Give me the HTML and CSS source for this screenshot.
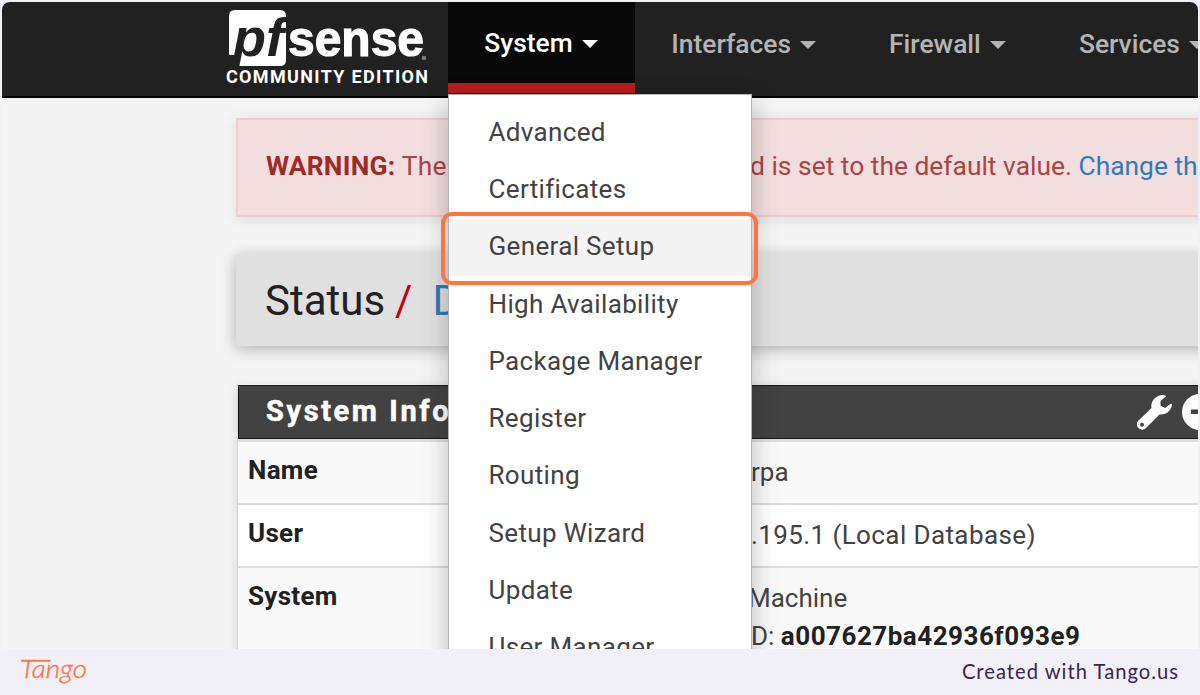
FILE: index.html
```html
<!DOCTYPE html>
<html lang="en">
<head>
<meta charset="utf-8">
<title>pfSense - Status</title>
<link rel="stylesheet" href="styles.css">
</head>
<body>
<div class="frame">
  <header class="navbar">
    <svg class="brand" width="222" height="94" viewBox="226 2 222 94">
      <path d="M235 10H280Q286 10 286 16V60Q286 66 280 66H235L237 55H229V16Q229 10 235 10Z" fill="#fff"/>
      <text x="233" y="55.500" class="brand-pf" textLength="51" lengthAdjust="spacingAndGlyphs">pf</text>
      <text x="288" y="56" class="brand-sense" textLength="136" lengthAdjust="spacingAndGlyphs">sense</text>
      <circle cx="424" cy="58" r="2.3" fill="#777"/>
      <text x="226" y="83" class="brand-edition" textLength="202">COMMUNITY EDITION</text>
    </svg>
    <nav class="nav">
      <a class="nav-item active">System<i class="caret"></i></a>
      <a class="nav-item">Interfaces<i class="caret"></i></a>
      <a class="nav-item">Firewall<i class="caret"></i></a>
      <a class="nav-item">Services<i class="caret"></i></a>
    </nav>
  </header>
  <main class="content">
    <div class="alert">
      <p class="alert-start"><b>WARNING:</b> The</p>
      <p class="alert-end">d is set to the default value. <a>Change the</a></p>
    </div>
    <div class="crumbs"><span>Status</span><span class="slash">/</span><a>D</a></div>
    <section class="panel">
      <div class="panel-head">
        <h2>System Info</h2>
        <svg class="wrench" width="38" height="38" viewBox="0 0 38 38">
          <path fill="#fff" fill-rule="evenodd" d="M28 2Q31 2 31 3.500L25.500 8V12.500L30 15L36 10.500Q37.500 10.500 36.500 14Q33.500 22 24.500 21.500L11 35Q8 38 4 35.500Q0 32 3 28L16.500 15Q15.500 10 19 6Q23 2 28 2ZM7 29.800A2 2 0 1 0 7 33.800A2 2 0 0 0 7 29.800Z"/>
        </svg>
        <svg class="minus" width="36" height="36" viewBox="0 0 36 36"><circle cx="18" cy="18" r="18" fill="#fff"/><path d="M9 15.500H27V20H9Z" fill="#424242"/></svg>
      </div>
      <div class="row odd first"><b>Name</b><p>rpa</p></div>
      <div class="row"><b>User</b><p class="user">.195.1 (Local Database)</p></div>
      <div class="row odd system"><b>System</b><p class="machine"><span>Machine</span><br>D: <strong>a007627ba42936f093e9</strong></p></div>
    </section>
  </main>
  <ul class="menu">
    <li>Advanced</li>
    <li>Certificates</li>
    <li class="hover">General Setup</li>
    <li>High Availability</li>
    <li>Package Manager</li>
    <li>Register</li>
    <li>Routing</li>
    <li>Setup Wizard</li>
    <li>Update</li>
    <li>User Manager</li>
  </ul>
  <div class="highlight"></div>
</div>
<footer class="footer">
  <svg class="tango" width="72" height="40" viewBox="18 652 72 40">
    <text x="20" y="678" class="tango-text" textLength="67" lengthAdjust="spacingAndGlyphs">Tango</text>
    <path d="M22 660.800H50" fill="none" stroke="#ff7442" stroke-width="1.700" stroke-linecap="round"/>
  </svg>
  <span class="credit">Created with Tango.us</span>
</footer>
</body>
</html>
```

FILE: styles.css
```css
* { box-sizing: border-box; }
body {
  margin: 0;
  padding: 2px 2px 0;
  width: 1200px;
  height: 695px;
  overflow: hidden;
  background: #f2f0f7;
  font-family: Roboto, "Liberation Sans", sans-serif;
}
p, h2, ul { margin: 0; padding: 0; }
.frame {
  position: relative;
  height: 647px;
  overflow: hidden;
  border-radius: 8px 8px 0 0;
  background: #f4f4f4;
}
.navbar {
  display: flex;
  height: 96px;
  padding-left: 224px;
  background: #212121;
  border-bottom: 2px solid #000;
}
.brand { flex: none; display: block; }
.brand-pf { font: italic 700 53px "Liberation Sans", sans-serif; fill: #212121; }
.brand-sense {
  font: 700 50px "Liberation Sans", sans-serif;
  fill: #fff;
  stroke: #fff;
  stroke-width: 1.2px;
}
.brand-edition { font: 700 18px Roboto, sans-serif; fill: #fff; }
.nav { display: flex; }
.nav-item {
  flex: none;
  display: flex;
  align-items: center;
  height: 91px;
  padding: 0 36.300px 8px;
  font-size: 26.400px;
  font-weight: 500;
  color: #b5b5b5;
}
.nav-item.active {
  width: 187px;
  color: #fff;
  background: #080808;
  border-bottom: 10px solid #b71c1c;
  padding-bottom: 0;
  padding-top: 1px;
}
.caret {
  margin-left: 9.500px;
  margin-top: 2px;
  border: 8px solid transparent;
  border-top-color: currentColor;
  border-bottom: 0;
}
.content { width: 1100px; padding: 20px 0 0 234px; }
.alert {
  position: relative;
  display: flex;
  align-items: center;
  width: 1000px;
  height: 99px;
  border: 2px solid #ebccd1;
  background: #f2dede;
  box-shadow: 0 2px 14px rgba(0, 0, 0, .1);
  color: #a94442;
  font-size: 26.400px;
  white-space: nowrap;
}
.alert p { padding-bottom: 4px; }
.alert-start { flex: none; width: 512px; padding-left: 28px; letter-spacing: .23px; }
.alert b { font-weight: 700; color: #9f2b29; }
.alert a, .crumbs a { color: #337ab7; }
.crumbs {
  display: flex;
  align-items: center;
  width: 1000px;
  height: 92px;
  margin-top: 37px;
  padding: 0 0 0 29px;
  background: #e0e0e0;
  border-radius: 2px;
  box-shadow: 0 3px 16px rgba(0, 0, 0, .28);
  font-size: 42px;
  color: #212121;
}
.crumbs .slash { margin: 0 20px 0 10px; color: #c4001a; }
.panel {
  width: 1000px;
  margin: 39px 0 0 1px;
  border-left: 1px solid #d6d6d6;
  box-shadow: 0 2px 12px rgba(0, 0, 0, .12);
}
.panel-head {
  display: flex;
  align-items: center;
  height: 54px;
  padding-left: 27px;
  border: 1px solid #181818;
  background: #424242;
  color: #fff;
}
.panel-head h2 {
  width: 869px;
  padding-bottom: 2px;
  font-size: 29px;
  font-weight: 700;
  letter-spacing: 2.600px;
  -webkit-text-stroke: .5px #fff;
}
.wrench, .minus { flex: none; }
.minus { margin-left: 9px; }
.row {
  display: flex;
  align-items: flex-start;
  height: 63px;
  padding: 11px 0 0 10px;
  border-top: 2px solid #ddd;
  background: #fff;
  font-size: 26px;
  line-height: 34px;
  color: #424242;
}
.row.odd { background: #f9f9f9; }
.row.first { height: 64px; border-top-width: 3px; }
.row b { flex: none; width: 503px; font-weight: 700; color: #212121; letter-spacing: .3px; }
.row p { white-space: nowrap; padding-top: 2px; }
.row .user { letter-spacing: .4px; }
.row.system { height: 100px; }
.row .machine { line-height: 38px; padding-top: 0; }
.machine span { margin-left: -3px; }
.machine strong { color: #212121; letter-spacing: .5px; }
.menu {
  position: absolute;
  left: 446px;
  top: 92px;
  width: 304px;
  height: 600px;
  padding-top: 9px;
  list-style: none;
  background: #fff;
  border: 1px solid #b5b5b5;
  box-shadow: 0 8px 24px rgba(0, 0, 0, .25);
}
.menu li {
  display: flex;
  align-items: center;
  height: 57.300px;
  padding: 0 0 2px 39.500px;
  font-size: 26px;
  letter-spacing: .34px;
  color: #424242;
}
.menu .hover { background: #f4f4f4; }
.highlight {
  position: absolute;
  left: 439px;
  top: 210px;
  width: 317px;
  height: 73px;
  border: 4px solid #ff7442;
  border-radius: 11px;
}
.footer {
  display: flex;
  align-items: center;
  justify-content: space-between;
  height: 46px;
  padding: 0 19px 0 16px;
}
.tango-text { font: italic 300 26px Lato, sans-serif; fill: #ff7442; stroke: #ff7442; stroke-width: .4px; }
.credit {
  padding-bottom: 3px;
  font: 400 20.200px Lato, sans-serif;
  letter-spacing: 1px;
  color: #39264f;
}
```
